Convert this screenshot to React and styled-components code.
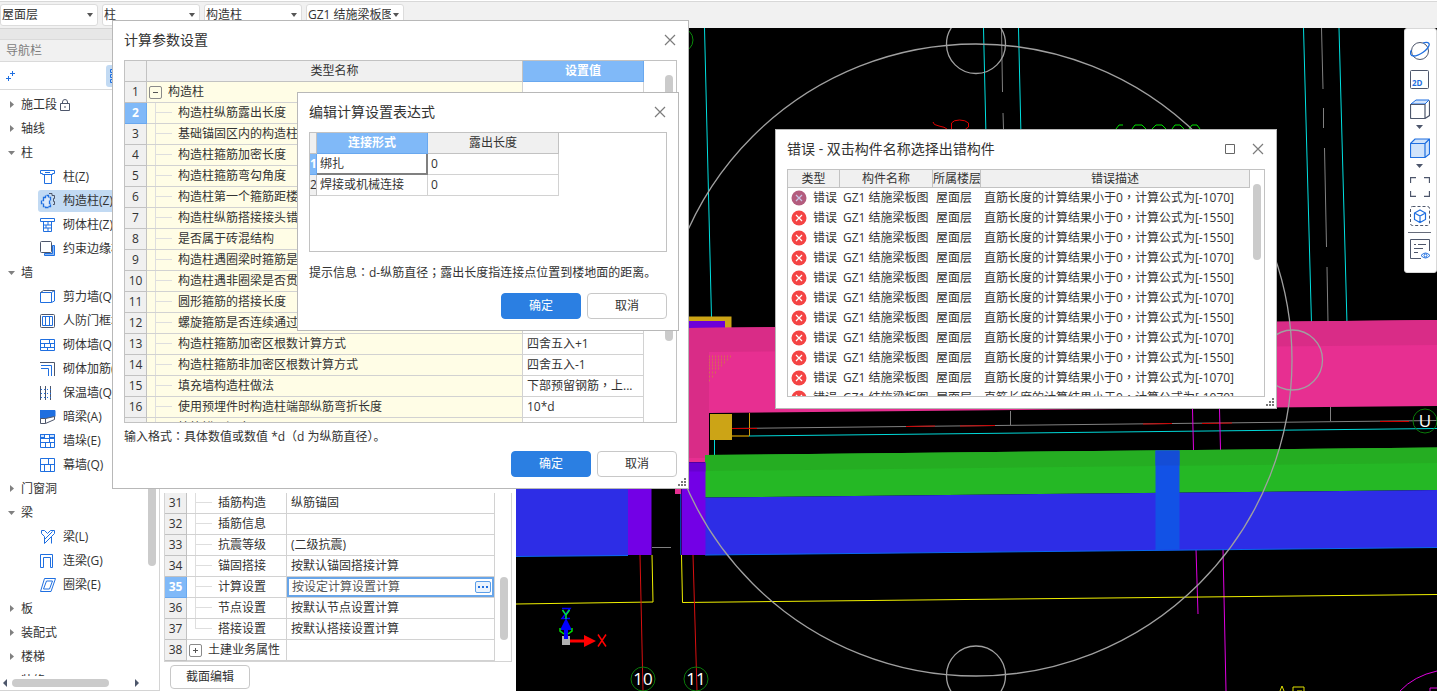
import React, { useState } from 'react';
import styled, { createGlobalStyle, css } from 'styled-components';

const GlobalStyle = createGlobalStyle`
	*, *::before, *::after {
		box-sizing: border-box;
	}
	body {
		margin: 0;
		overflow: hidden;
		color: #333;
		background: #fff;
		font: 12px/20px 'Open Sans', 'Noto Sans CJK SC', sans-serif;
	}
	button, input, select {
		font: inherit;
		color: inherit;
	}
`;

const Screen = styled.div`
	position: relative;
	display: flex;
	flex-direction: column;
	height: 100vh;
	overflow: hidden;
`;

/* ---------- top bar ---------- */

const TopBar = styled.header`
	display: flex;
	gap: 4px;
	height: 28px;
	margin-top: 1px;
	padding-top: 2px;
	flex: none;
	margin-bottom: -1px;
	background: #f1f1f1;
	border-top: 1px solid #d8d8d8;
`;

const Combo = styled.label`
	position: relative;
	width: 98px;
	height: 22px;

	svg {
		position: absolute;
		right: 5px;
		top: 9px;
		pointer-events: none;
	}
`;

const ComboSelect = styled.select`
	appearance: none;
	width: 100%;
	height: 22px;
	padding: 0 12px 0 1px;
	background: #fff;
	border: 1px solid #dcdcdc;
	border-radius: 3px;
	outline: none;
`;

const Body = styled.div`
	display: flex;
	flex: 1;
	min-height: 0;
`;

/* ---------- navigation ---------- */

const Nav = styled.nav`
	display: flex;
	flex-direction: column;
	width: 160px;
	flex: none;
	border-right: 1px solid #d4d4d4;
	border-bottom: 1px solid #d4d4d4;
`;

const NavStrip = styled.div`
	height: 11px;
	flex: none;
	background: #e7e7e7;
	border-top: 1px solid #d4d4d4;
`;

const NavTitle = styled.div`
	height: 23px;
	flex: none;
	padding: 1px 6px;
	color: #7d7d7d;
	background: #f1f1f1;
	border-top: 1px solid #dadada;
	border-bottom: 1px solid #dadada;
`;

const NavTools = styled.div`
	display: flex;
	justify-content: space-between;
	height: 28px;
	flex: none;
	padding: 3px 5px;
	border-bottom: 1px solid #dadada;
`;

const ToolButton = styled.button`
	display: flex;
	align-items: center;
	height: 22px;
	padding: 0 ${(p) => (p.$active ? '4px' : '0')};
	border: none;
	border-radius: 3px;
	background: ${(p) => (p.$active ? '#c2daf3' : 'none')};
	width: ${(p) => (p.$active ? '48px' : 'auto')};
`;

const NavScroll = styled.div`
	display: flex;
	flex: 1;
	min-height: 0;
	padding-top: 3px;
`;

const Tree = styled.ul`
	flex: 1;
	margin: 0;
	padding: 0;
	overflow: hidden;
	list-style: none;
	white-space: nowrap;
`;

const TreeItem = styled.li`
	display: flex;
	height: 24px;
	padding-left: ${(p) => (p.$child ? '38px' : '5px')};
	align-items: center;
`;

const TreeButton = styled.button`
	display: flex;
	align-items: center;
	flex: 1;
	height: 22px;
	padding: 0 ${(p) => (p.$child ? '2px' : '3px')};
	gap: ${(p) => (p.$child ? '7px' : '3px')};
	border: none;
	border-radius: 3px;
	background: ${(p) => (p.$selected ? '#c2daf3' : 'none')};
	text-align: left;
`;

const Thumb = styled.div`
	width: 8px;
	height: ${(p) => p.$length}px;
	border-radius: 4px;
	background: #cbcbcb;
`;

const VTrack = styled.div`
	width: 11px;
	flex: none;
	padding-top: ${(p) => p.$start || 0}px;
`;

const HTrack = styled.div`
	display: flex;
	align-items: center;
	gap: 4px;
	height: 14px;
	flex: none;
	padding: 0 19px 0 3px;
`;

const HThumb = styled.div`
	width: 97px;
	height: 8px;
	margin-right: auto;
	border-radius: 4px;
	background: #cbcbcb;
`;

/* ---------- grids ---------- */

const Grid = styled.table`
	border-collapse: separate;
	border-spacing: 0;
	table-layout: fixed;
	width: ${(p) => p.$width}px;
	flex: none;
	align-self: flex-start;

	th, td {
		height: 21px;
		padding: 0;
		font-weight: normal;
		border-right: 1px solid #d2d2d2;
		border-bottom: 1px solid #d2d2d2;
		white-space: nowrap;
		overflow: hidden;
	}
	thead th {
		height: 20px;
		background: #f0f0f0;
		border-color: #c2c2c2;
	}
`;

const active = css`
	&&& {
		color: #fff;
		font-weight: bold;
		background: #80b9f8;
		border-color: #69a8ef;
	}
`;

const HeadCell = styled.th`
	${(p) => p.$active && active}
`;

const NumCell = styled.th`
	&& {
		background: #f0f0f0;
		border-color: #c2c2c2;
	}
	${(p) => p.$active && active}
`;

const NameCell = styled.td`
	background: ${(p) => p.$tint || '#fff'};
`;

const NameInner = styled.div`
	display: flex;
	align-items: center;
	height: 20px;
	gap: 6px;
	padding-left: ${(p) => (p.$group ? '2px' : '8px')};
`;

const Branch = styled.i`
	width: 17px;
	height: ${(p) => (p.$last ? '10px' : '20px')};
	align-self: flex-start;
	border-left: 1px solid #dedede;
	background: linear-gradient(#dedede, #dedede) 0 9px / 100% 1px no-repeat;
`;

const Expander = styled.button`
	width: 13px;
	height: 13px;
	padding: 0;
	display: grid;
	place-items: center;
	background: none;
	border: 1px solid #8a8a8a;
	border-radius: 2px;
`;

const ValueCell = styled.td`
	&& {
		padding-left: 4px;
		line-height: 18px;
	}
	${(p) => p.$editing && css`
		&& {
			padding: 0;
		}
	`}
`;

const Editor = styled.div`
	display: flex;
	align-items: center;
	height: 20px;
	padding: 0 3px;
	box-shadow: inset 0 0 0 2px #68a5e8;
`;

const EditorInput = styled.input`
	flex: 1;
	min-width: 0;
	height: 18px;
	padding: 0 2px;
	color: #555;
	border: none;
	outline: none;
	background: none;
`;

const MoreButton = styled.button`
	display: grid;
	place-items: center;
	width: 16px;
	height: 12px;
	padding: 0;
	background: #eaf3fd;
	border: 1px solid #5b9ee8;
	border-radius: 2px;
`;

/* ---------- property panel ---------- */

const Props = styled.section`
	display: flex;
	flex-direction: column;
	justify-content: flex-end;
	width: 356px;
	flex: none;
	padding: 0 4px 2px;
`;

const PropsFrame = styled.div`
	display: flex;
	justify-content: space-between;
	border: 1px solid #d4d4d4;
	border-top: none;
	margin-bottom: 3px;
`;

const PlainButton = styled.button`
	width: 80px;
	height: 24px;
	margin-left: 6px;
	background: #fff;
	border: 1px solid #c8c8c8;
	border-radius: 4px;
`;

/* ---------- model view ---------- */

const View = styled.main`
	position: relative;
	flex: 1;
	min-width: 0;
	background: #000;

	> svg {
		display: block;
		width: 100%;
		height: 100%;
	}
`;

const ViewTools = styled.div`
	position: absolute;
	top: 0;
	right: 0;
	display: flex;
	flex-direction: column;
	align-items: center;
	gap: 9px;
	width: 33px;
	height: 245px;
	padding: 12px 2px 0 0;
	background: #fff;
	border: 1px solid #d8d8d8;
	border-radius: 3px;
`;

const ViewButton = styled.button`
	display: flex;
	flex-direction: column;
	align-items: center;
	gap: 6px;
	padding: 0;
	border: none;
	background: none;
	line-height: 0;
`;

const Divider = styled.hr`
	width: 23px;
	margin: -3px 0;
	border: none;
	border-top: 1px solid #666c7a;
`;

/* ---------- dialogs ---------- */

const Dialog = styled.section`
	position: absolute;
	left: ${(p) => p.$x}px;
	top: ${(p) => p.$y}px;
	width: ${(p) => p.$w}px;
	display: flex;
	flex-direction: column;
	padding: 0 11px 11px;
	background: #fff;
	border: 1px solid #b8b8b8;
`;

const DialogHead = styled.header`
	display: flex;
	align-items: center;
	gap: 17px;
	height: 39px;
	padding: 0 1px 2px 0;
`;

const DialogTitle = styled.h2`
	flex: 1;
	margin: 0;
	font-size: 14px;
	font-weight: normal;
`;

const WinButton = styled.button`
	padding: 0;
	border: none;
	background: none;
	line-height: 0;
`;

const Frame = styled.div`
	display: flex;
	justify-content: space-between;
	height: ${(p) => p.$h}px;
	overflow: hidden;
	border: 1px solid #c2c2c2;
`;

const Hint = styled.p`
	margin: ${(p) => (p.$roomy ? '11px 0 10px' : '4px 0')};
`;

const Actions = styled.footer`
	display: flex;
	justify-content: flex-end;
	gap: 6px;
`;

const ActionButton = styled.button`
	width: 80px;
	height: 26px;
	border: 1px solid ${(p) => (p.$primary ? '#2b7fe2' : '#c8c8c8')};
	border-radius: 4px;
	color: ${(p) => (p.$primary ? '#fff' : '#333')};
	background: ${(p) => (p.$primary ? '#2b7fe2' : '#fff')};
`;

const Grip = styled.svg`
	position: absolute;
	right: 2px;
	bottom: 2px;
`;

const ErrorTable = styled(Grid)`
	th {
		line-height: 16px;
	}
	td {
		height: 20px;
		padding-left: 3px;
		line-height: 18px;
		border: none;
	}
	thead th {
		height: 18px;
	}
`;

const ErrorKind = styled.div`
	display: flex;
	align-items: center;
	gap: 6px;
`;

const SelectedCell = styled.td`
	&& {
		border-right: 2px solid #808080;
		border-bottom: 2px solid #808080;
		padding-left: 3px;
		line-height: 18px;
	}
`;

const ExprCell = styled.td`
	&& {
		padding-left: 3px;
	}
`;

const Centered = styled.span`
	font-family: 'Noto Sans CJK TC', sans-serif;
	line-height: 0;
`;

// commas, colons and brackets sit in the middle of their cell in the UI font
function Cn({ children }) {
	return children
		.split(/([，：；])/)
		.map((part, i) => (i % 2 ? <Centered key={i} lang="zh-TW">{part}</Centered> : part));
}

/* ---------- icons ---------- */

const BLUE = '#1f6fe0';
const SLATE = '#4d566b';

const treeIcons = {
	column: <path d="M.500 1.500h14v3h-2v1h-10v-1h-2zM4.500 5.500v9h7v-9M5 3.500h5" />,
	tie: (
		<>
			<path d="M9 .500h3v2h2.500v3h-1v3h1v3H13" stroke={SLATE} />
			<path d="M3.500 4.500h2v-2h3v2h2v3h-1v3h1v3h-2v1h-3v-1h-2v-3h-2v-3h2z" fill="#dbe9fb" strokeDasharray="4 1" strokeWidth="1.300" />
		</>
	),
	brick: <path d="M.500 1.500h14v3H.500zM3.500 4.500v10h8v-10M3.500 8h8M3.500 11h8M8 5v3M6 8v3M8 11v3" />,
	edge: (
		<>
			<path d="M12.500 4.500h2v10h-10v-2h8z" fill="#8db9f4" />
			<rect x=".500" y=".500" width="11" height="11" rx="1" stroke={SLATE} fill="#fff" />
		</>
	),
	shear: (
		<>
			<path d="M.500 3.500h11v10H.500zM11.500 13.500l3-1.500V1.500l-3 2" />
			<path d="M.500 3.500l3-2h11" stroke={SLATE} />
		</>
	),
	frame: (
		<>
			<rect x=".500" y="1.500" width="14" height="13" rx="1" stroke={SLATE} />
			<path d="M2.500 3.500h10v9h-10zM5.500 3.500v9M9.500 3.500v9" />
		</>
	),
	bricks: <path d="M.500 2.500h14v11H.500zM.500 6.500h14M.500 10.500h14M9.500 2.500v4M4.500 6.500v4M10.500 6.500v4M7.500 10.500v3" />,
	rebar: (
		<>
			<path d="M0 1.500h14.500V15" stroke={SLATE} />
			<path d="M1 4.500h10.500V15M1 7.500h7.500V15" />
		</>
	),
	insul: (
		<>
			<path d="M.500 1v14M5.500 1v14M10.500 1v14" stroke={SLATE} />
			<path d="M1 4.500h10M1 8.500h10M1 12.500h10" strokeDasharray="1 2" />
		</>
	),
	hidden: (
		<>
			<path d="M0 1.500h15v6L5.500 9.500H0z" fill={BLUE} />
			<path d="M.500 9.500h5v5h-5zM5.500 14.500l9-4v-3l-9 2" stroke={SLATE} fill="#fff" />
		</>
	),
	stack: (
		<>
			<path d="M.500 1.500h4v3h-4zM9.500 1.500h5v3h-5z" fill="#cfe1fb" />
			<path d="M.500 1.500h14v13H.500zM.500 5.500h14M.500 9.500h14M4.500 1.500v4M9.500 1.500v8M5.500 9.500v5M10.500 9.500v5" />
		</>
	),
	curtain: <path d="M.500 1.500h14v13H.500zM.500 7.500h14M8.500 1.500v6M4.500 7.500v7M10.500 7.500v7" />,
	beam: <path d="M1.500 4.500v-3h3l3 3 3-3h4v3l-3 3v7M1.500 4.500l3 3v7l7-7M4.500 10.500l8-8" />,
	link: <path d="M.500 14.500V1.500h12v13h-2v-10h-7v10z" />,
	ring: <path d="M4.500 1.500h11l-4.500 13H.500zM6.500 4h6L9.500 12h-6z" />,
};

function TreeIcon({ name }) {
	return (
		<svg width="16" height="16" viewBox="0 0 16 16" fill="none" stroke={BLUE}>
			{treeIcons[name]}
		</svg>
	);
}

function Caret({ open }) {
	return (
		<svg width="10" height="10" viewBox="0 0 10 10" fill="#808080">
			<path d={open ? 'M0 3h7L3.500 7z' : 'M2 1v7l4-3.500z'} />
		</svg>
	);
}

function Lock() {
	return (
		<svg width="10" height="12" viewBox="0 0 10 12" fill="none" stroke={SLATE}>
			<path d="M.500 4.500h9v7h-9zM2.500 4.500V3a2.500 2.500 0 0 1 5 0v1.500M5 7v2" />
		</svg>
	);
}

function CloseIcon() {
	return (
		<svg width="12" height="12" viewBox="0 0 12 12" stroke="#7c7c7c" strokeWidth="1.200">
			<path d="M1 1l10 10M11 1L1 11" />
		</svg>
	);
}

function GripDots() {
	return (
		<Grip width="8" height="8" viewBox="0 0 8 8" fill="#777">
			<path d="M6 0h2v2H6zM3 3h2v2H3zM6 3h2v2H6zM0 6h2v2H0zM3 6h2v2H3zM6 6h2v2H6z" />
		</Grip>
	);
}

function ErrorIcon({ dim }) {
	return (
		<svg width="16" height="16" viewBox="0 0 16 16">
			<circle cx="8" cy="8" r="7.500" fill={dim ? '#b35c7e' : '#f44444'} />
			<path d="M5 5l6 6M11 5l-6 6" stroke={dim ? '#c9c3e6' : '#fff'} strokeWidth="1.200" />
		</svg>
	);
}

const viewIcons = [
	{
		label: '动态观察',
		art: (
			<>
				<circle cx="10" cy="10" r="8.500" stroke={SLATE} />
				<path d="M13 2C17 .500 20 1.500 19 4.500 17.500 9 9 15 3.500 15 .500 15-.500 12 1.500 9" strokeWidth="1.300" />
			</>
		),
	},
	{
		label: '二维',
		art: (
			<>
				<rect x=".500" y=".500" width="18" height="18" rx="1" stroke={SLATE} />
				<text x="2" y="16" fill={BLUE} stroke="none" fontSize="8" fontWeight="bold">2D</text>
			</>
		),
	},
	{
		label: '俯视',
		menu: true,
		art: (
			<>
				<path d="M1 5L6 1h13l-4 4z" fill="#d3e4fb" />
				<path d="M.500 5.500h14.500v14H1.500q-1 0-1-1zM15 19.500l4.500-3V1.500" stroke={SLATE} strokeWidth="1.200" />
			</>
		),
	},
	{
		label: '着色',
		menu: true,
		art: <path d="M.500 5.500L5 1h14.500v15L15 19.500H.500zM.500 5.500H15v14M15 5.500L19.500 1" fill="#d0e3fb" strokeWidth="1.200" />,
	},
	{ label: '全屏', art: <path d="M.500 6V.500H6M14 .500h5.500V6M19.500 14v5.500H14M6 19.500H.500V14" stroke={SLATE} strokeWidth="1.300" /> },
	{
		label: '局部三维',
		art: (
			<>
				<rect x=".500" y=".500" width="19" height="19" rx="2" stroke={SLATE} strokeDasharray="3 2" />
				<path d="M10 4l5.500 3v6.500L10 16.500l-5.500-3V7zM4.500 7l5.500 3 5.500-3M10 10v6.500" strokeWidth="1.200" />
			</>
		),
	},
	{
		label: '显示设置',
		last: true,
		art: (
			<>
				<path d="M11 19.500H.500V.500h19V12M4 5.500h2M8 5.500h8M4 9.500h9M4 13.500h4" stroke={SLATE} />
				<path d="M11 16.500q4.500-5 9 0-4.500 5-9 0z" fill="#fff" />
				<circle cx="15.500" cy="16.500" r="1.500" />
			</>
		),
	},
];

/* ---------- data ---------- */

const combos = [
	{ label: '楼层', value: '屋面层' },
	{ label: '构件大类', value: '柱' },
	{ label: '构件类型', value: '构造柱' },
	{ label: '构件', value: 'GZ1 结施梁板图' },
];

const treeData = [
	{ text: '施工段', lock: true },
	{ text: '轴线' },
	{ text: '柱', open: true },
	{ text: '柱(Z)', icon: 'column' },
	{ text: '构造柱(Z)', icon: 'tie' },
	{ text: '砌体柱(Z)', icon: 'brick' },
	{ text: '约束边缘柱(Z)', icon: 'edge' },
	{ text: '墙', open: true },
	{ text: '剪力墙(Q)', icon: 'shear' },
	{ text: '人防门框墙(RF)', icon: 'frame' },
	{ text: '砌体墙(Q)', icon: 'bricks' },
	{ text: '砌体加筋(Y)', icon: 'rebar' },
	{ text: '保温墙(Q)', icon: 'insul' },
	{ text: '暗梁(A)', icon: 'hidden' },
	{ text: '墙垛(E)', icon: 'stack' },
	{ text: '幕墙(Q)', icon: 'curtain' },
	{ text: '门窗洞' },
	{ text: '梁', open: true },
	{ text: '梁(L)', icon: 'beam' },
	{ text: '连梁(G)', icon: 'link' },
	{ text: '圈梁(E)', icon: 'ring' },
	{ text: '板' },
	{ text: '装配式' },
	{ text: '楼梯' },
	{ text: '装修' },
];

const propRows = [
	{ no: 31, name: '插筋构造', value: '纵筋锚固' },
	{ no: 32, name: '插筋信息', value: '' },
	{ no: 33, name: '抗震等级', value: '(二级抗震)' },
	{ no: 34, name: '锚固搭接', value: '按默认锚固搭接计算' },
	{ no: 35, name: '计算设置', value: '按设定计算设置计算', editing: true, active: true },
	{ no: 36, name: '节点设置', value: '按默认节点设置计算' },
	{ no: 37, name: '搭接设置', value: '按默认搭接设置计算', last: true },
	{ no: 38, name: '土建业务属性', value: '', group: '+' },
];

const calcRows = [
	{ name: '构造柱', group: '-' },
	{ name: '构造柱纵筋露出长度', active: true },
	{ name: '基础锚固区内的构造柱箍筋数量' },
	{ name: '构造柱箍筋加密长度' },
	{ name: '构造柱箍筋弯勾角度' },
	{ name: '构造柱第一个箍筋距楼板面的距离' },
	{ name: '构造柱纵筋搭接接头错开百分率' },
	{ name: '是否属于砖混结构' },
	{ name: '构造柱遇圈梁时箍筋是否贯通' },
	{ name: '构造柱遇非圈梁是否贯通' },
	{ name: '圆形箍筋的搭接长度' },
	{ name: '螺旋箍筋是否连续通过' },
	{ name: '构造柱箍筋加密区根数计算方式', value: '四舍五入+1' },
	{ name: '构造柱箍筋非加密区根数计算方式', value: '四舍五入-1' },
	{ name: '填充墙构造柱做法', value: '下部预留钢筋，上...' },
	{ name: '使用预埋件时构造柱端部纵筋弯折长度', value: '10*d' },
	{ name: '植筋锚固深度', no: ' ' },
].map((row, i) => ({ no: i + 1, value: '', ...row }));

const errors = [1070, 1550, 1550, 1070, 1550, 1070, 1550, 1070, 1550, 1070, 1070];

/* ---------- parts ---------- */

function TreeRow({ row, tint }) {
	return (
		<tr>
			<NumCell scope="row" $active={row.active}>{row.no}</NumCell>
			<NameCell $tint={tint}>
				<NameInner $group={row.group}>
					{row.group ? (
						<Expander aria-label={row.name}>
							<svg width="7" height="7" viewBox="0 0 7 7" stroke="#555">
								<path d={row.group === '+' ? 'M1 3.500h5M3.500 1v5' : 'M1 3.500h5'} />
							</svg>
						</Expander>
					) : (
						<Branch $last={row.last} />
					)}
					<span>{row.name}</span>
				</NameInner>
			</NameCell>
			<ValueCell $editing={row.editing}>
				{row.editing ? (
					<Editor>
						<EditorInput aria-label={row.name} defaultValue={row.value} />
						<MoreButton aria-label="更多">
							<svg width="10" height="2" viewBox="0 0 10 2" fill={BLUE}>
								<path d="M0 0h2v2H0zM4 0h2v2H4zM8 0h2v2H8z" />
							</svg>
						</MoreButton>
					</Editor>
				) : (
					<Cn>{row.value}</Cn>
				)}
			</ValueCell>
		</tr>
	);
}

function NavPanel() {
	const [selected, setSelected] = useState('构造柱(Z)');

	return (
		<Nav>
			<NavStrip />
			<NavTitle>导航栏</NavTitle>
			<NavTools>
				<ToolButton aria-label="新建">
					<svg width="12" height="12" viewBox="0 0 12 12" stroke={BLUE}>
						<path d="M1 8.500h5M3.500 6v5M5 3.500h5M7.500 1v5" />
					</svg>
				</ToolButton>
				<ToolButton $active aria-label="列表">
					<svg width="14" height="14" viewBox="0 0 14 14" fill="none" stroke={BLUE}>
						<path d="M.500 .500h3v3h-3zM.500 5.500h3v3h-3zM.500 10.500h3v3h-3zM6 2h8M6 7h8M6 12h8" />
					</svg>
				</ToolButton>
			</NavTools>
			<NavScroll>
				<Tree>
					{treeData.map((item) => (
						<TreeItem key={item.text} $child={item.icon}>
							<TreeButton
								$child={item.icon}
								$selected={item.text === selected}
								onClick={() => setSelected(item.text)}
							>
								{item.icon ? <TreeIcon name={item.icon} /> : <Caret open={item.open} />}
								{item.text}
								{item.lock && <Lock />}
							</TreeButton>
						</TreeItem>
					))}
				</Tree>
				<VTrack $start={179}>
					<Thumb $length={294} />
				</VTrack>
			</NavScroll>
			<HTrack>
				<svg width="5" height="8" viewBox="0 0 5 8" fill={SLATE}><path d="M4 0v8L0 4z" /></svg>
				<HThumb />
				<svg width="5" height="8" viewBox="0 0 5 8" fill={SLATE}><path d="M0 0v8l4-4z" /></svg>
			</HTrack>
		</Nav>
	);
}

function PropertyPanel() {
	return (
		<Props>
			<PropsFrame>
				<Grid $width={330}>
					<colgroup>
						<col width="22" />
						<col width="100" />
						<col />
					</colgroup>
					<tbody>
						{propRows.map((row) => <TreeRow key={row.no} row={row} />)}
					</tbody>
				</Grid>
				<VTrack $start={84}>
					<Thumb $length={63} />
				</VTrack>
			</PropsFrame>
			<PlainButton>截面编辑</PlainButton>
		</Props>
	);
}

function Scene() {
	return (
		<svg viewBox="516 28 921 663" preserveAspectRatio="xMinYMin slice" fill="none">
			{/* grid axes */}
			<g stroke="#00e0e0">
				<path d="M704.500 28L711.500 318M983.500 28l3 130M1018.500 28l3 130M1303.500 28l8 296M1339 28l8 296" />
			</g>
			<g stroke="#808080">
				<path d="M1001.500 28l1 64M1003 113l.500 16M1321.500 28l1.500 61M1323.500 108v20M1324.500 148l2 99M1327 267l1 56" />
			</g>
			<path d="M933 122q0 3 6 4t8 3M951.500 129v-6q2-3 8-3t9 3v4l-3 2" stroke="#e00000" />
			<path d="M1116 129l3-4h4M1132 129l3-4h7l4 4M1152 129l4-4h6l4 4M1172 129l3-4h5l4 4M1189 129l3-4h5l3 4" stroke="#00e000" />
			<circle cx="681" cy="40" r="12" stroke="#0a8a0a" />

			{/* upper beam */}
			<path d="M688 316.500h43.500V332H688z" fill="#cca416" />
			<path d="M688 321h37v10h-37z" fill="#6c00d8" />
			<path d="M688 328L1437 320v86L709 413v49h-21z" fill="#e72f91" />
			<path d="M688 328L1437 320v25L709 352v106h-21z" fill="#d92c87" />
			<path d="M709 356.500h23M709 359.500h19M709 362.500h16M709 365.500h13M709 368.500h12M709 372.500h8M709 376.500h6M709 380.500h3" stroke="#d0803c" strokeDasharray="1 2" strokeWidth="2" opacity=".700" />
			<path d="M710 414h22v26h-22z" fill="#cca416" />
			<path d="M749.500 413v23" stroke="#d09a10" />
			<path d="M732 436h17" stroke="#806000" strokeWidth="2" />
			<path d="M732 428.500L1437 420.500M1010.500 411v14M1330.500 407v14" stroke="#808080" />
			<path d="M732 428.500h25M906 426.500l29-.500M960 426l35-.500M1143 424l29-.500M1202 423.500l30-.500M1380 421.500h29" stroke="#d00000" />
			<path d="M749 436L1437 428.500M714.500 440v15" stroke="#00d8d8" />
			<path d="M1192.500 409l1 41M1219.500 409l1 41M1196 549l2 65M1223 549l3 142" stroke="#e000e0" />

			{/* lower beam */}
			<path d="M705 455L1437 447.500v42.500L705 497.500z" fill="#25b825" />
			<path d="M705 455L1437 447.500v15.500L705 471z" fill="#25ad22" />
			<path d="M705 497.500L1437 490v57.500L705 555z" fill="#2d2de6" />
			<path d="M516 489h112v67H516z" fill="#2d2de6" />
			<path d="M516 556.500l112-1M705 555L1437 547.500" stroke="#0a68f0" />
			<path d="M1155.500 450.500h24v99l-24 .500z" fill="#1252e6" />
			<path d="M1155.500 450.500h24v15h-24z" fill="#144dd6" />
			<path d="M628 489h23.500v66H628zM681.500 462.500h24V555h-24z" fill="#7300e6" />
			<path d="M681.500 462.500h24v9h-24z" fill="#6800d0" />
			<path d="M675 489h6v5h-6z" fill="#e72f91" />
			<path d="M680.500 494v61" stroke="#0048a0" />
			<path d="M652 547.500h19" stroke="#808080" />
			<path d="M516 604l137-2-1-47M681.500 555l1 47.500L1437 594.500" stroke="#f0f000" />
			<path d="M640 555l3 136M693 555l4 136" stroke="#d81010" />

			{/* orbit control */}
			<g stroke="#a0a0a0" strokeWidth="1.300">
				<circle cx="976" cy="360" r="316" />
				<circle cx="976" cy="44" r="29.500" />
				<circle cx="976" cy="675.500" r="29.500" />
				<circle cx="1292.500" cy="360" r="30" />
			</g>

			{/* axis labels */}
			<g stroke="#0a7a0a">
				<circle cx="643" cy="679" r="12" />
				<circle cx="696" cy="679" r="12" />
				<circle cx="1425" cy="421" r="12" />
			</g>
			<g fill="#fff" fontSize="17" textAnchor="middle">
				<text x="643" y="685">10</text>
				<text x="696" y="685">11</text>
				<text x="1425" y="427">U</text>
			</g>
			<path d="M1280 691l2-5 2 5M1293 691v-4h11v4M1297 691h5" stroke="#e0e000" />
			<path d="M1400 691q14-15 37-20M1430 691v-3h7" stroke="#e000e0" />

			{/* coordinate tripod */}
			<path d="M562 636h8v9h-8z" fill="#b0b0b0" />
			<path d="M570 639.500h14V635l12 6-12 6v-4.500h-14z" fill="#f00" />
			<path d="M564 639v-9h-4l6-12 6 12h-4v9z" fill="#00f" />
			<path d="M560 628v3l4 3M572 628v3l-4 3" stroke="#00e000" strokeWidth="1.500" />
			<path d="M562 608.500h8l-8 10h8" stroke="#00f" strokeWidth="1.500" />
			<path d="M562.500 610l3.500 5 3.500-5M566 615v4" stroke="#00e040" strokeWidth="1.500" />
			<path d="M598 634.500l8 12M606 634.500l-8 12" stroke="#f00" strokeWidth="1.500" />
		</svg>
	);
}

function ModelView() {
	return (
		<View>
			<Scene />
			<ViewTools>
				{viewIcons.map((icon) => (
					<React.Fragment key={icon.label}>
						{icon.last && <Divider />}
						<ViewButton aria-label={icon.label}>
							<svg width="20" height="20" viewBox="0 0 20 20" fill="none" stroke={BLUE}>
								{icon.art}
							</svg>
							{icon.menu && (
								<svg width="7" height="4" viewBox="0 0 7 4" fill={SLATE}>
									<path d="M0 0h7L3.500 4z" />
								</svg>
							)}
						</ViewButton>
					</React.Fragment>
				))}
			</ViewTools>
		</View>
	);
}

function DialogBar({ title, sizable }) {
	return (
		<DialogHead>
			<DialogTitle>{title}</DialogTitle>
			{sizable && (
				<WinButton aria-label="最大化">
					<svg width="10" height="10" viewBox="0 0 10 10" fill="none" stroke="#666">
						<path d="M.500 .500h9v9h-9z" />
					</svg>
				</WinButton>
			)}
			<WinButton aria-label="关闭">
				<CloseIcon />
			</WinButton>
		</DialogHead>
	);
}

function DialogActions() {
	return (
		<Actions>
			<ActionButton $primary>确定</ActionButton>
			<ActionButton>取消</ActionButton>
		</Actions>
	);
}

function CalcDialog() {
	return (
		<Dialog $x={112} $y={20} $w={577}>
			<DialogBar title="计算参数设置" />
			<Frame $h={363}>
				<Grid $width={519}>
					<colgroup>
						<col width="22" />
						<col />
						<col width="121" />
					</colgroup>
					<thead>
						<tr>
							<HeadCell />
							<HeadCell>类型名称</HeadCell>
							<HeadCell $active>设置值</HeadCell>
						</tr>
					</thead>
					<tbody>
						{calcRows.map((row) => <TreeRow key={row.no} row={row} tint="#fffde6" />)}
					</tbody>
				</Grid>
				<VTrack $start={14}>
					<Thumb $length={266} />
				</VTrack>
			</Frame>
			<Hint><Cn>输入格式：具体数值或数值 *d（d 为纵筋直径）。</Cn></Hint>
			<DialogActions />
			<GripDots />
		</Dialog>
	);
}

function ExpressionDialog() {
	return (
		<Dialog $x={297} $y={92} $w={382}>
			<DialogBar title="编辑计算设置表达式" />
			<Frame $h={120}>
				<Grid $width={249}>
					<colgroup>
						<col width="7" />
						<col width="111" />
						<col />
					</colgroup>
					<thead>
						<tr>
							<HeadCell />
							<HeadCell $active>连接形式</HeadCell>
							<HeadCell>露出长度</HeadCell>
						</tr>
					</thead>
					<tbody>
						<tr>
							<NumCell scope="row" $active>1</NumCell>
							<SelectedCell>绑扎</SelectedCell>
							<ExprCell>0</ExprCell>
						</tr>
						<tr>
							<NumCell scope="row">2</NumCell>
							<ExprCell>焊接或机械连接</ExprCell>
							<ExprCell>0</ExprCell>
						</tr>
					</tbody>
				</Grid>
			</Frame>
			<Hint $roomy><Cn>提示信息：d-纵筋直径；露出长度指连接点位置到楼地面的距离。</Cn></Hint>
			<DialogActions />
		</Dialog>
	);
}

function ErrorDialog() {
	return (
		<Dialog $x={775} $y={129} $w={502}>
			<DialogBar title="错误 - 双击构件名称选择出错构件" sizable />
			<Frame $h={228}>
				<ErrorTable $width={462}>
					<colgroup>
						<col width="52" />
						<col width="93" />
						<col width="48" />
						<col />
					</colgroup>
					<thead>
						<tr>
							<th>类型</th>
							<th>构件名称</th>
							<th>所属楼层</th>
							<th>错误描述</th>
						</tr>
					</thead>
					<tbody>
						{errors.map((len, i) => (
							<tr key={i}>
								<td>
									<ErrorKind>
										<ErrorIcon dim={i === 0} />
										错误
									</ErrorKind>
								</td>
								<td>GZ1 结施梁板图</td>
								<td>屋面层</td>
								<td><Cn>{`直筋长度的计算结果小于0，计算公式为[-${len}]`}</Cn></td>
							</tr>
						))}
					</tbody>
				</ErrorTable>
				<VTrack $start={14}>
					<Thumb $length={76} />
				</VTrack>
			</Frame>
			<GripDots />
		</Dialog>
	);
}

function App() {
	return (
		<Screen lang="zh-CN">
			<GlobalStyle />
			<TopBar>
				{combos.map((combo) => (
					<Combo key={combo.label}>
						<ComboSelect aria-label={combo.label}>
							<option>{combo.value}</option>
						</ComboSelect>
						<svg width="6" height="4" viewBox="0 0 6 4" fill="#555">
							<path d="M0 0h6L3 4z" />
						</svg>
					</Combo>
				))}
			</TopBar>
			<Body>
				<NavPanel />
				<PropertyPanel />
				<ModelView />
			</Body>
			<CalcDialog />
			<ExpressionDialog />
			<ErrorDialog />
		</Screen>
	);
}

export default App;
